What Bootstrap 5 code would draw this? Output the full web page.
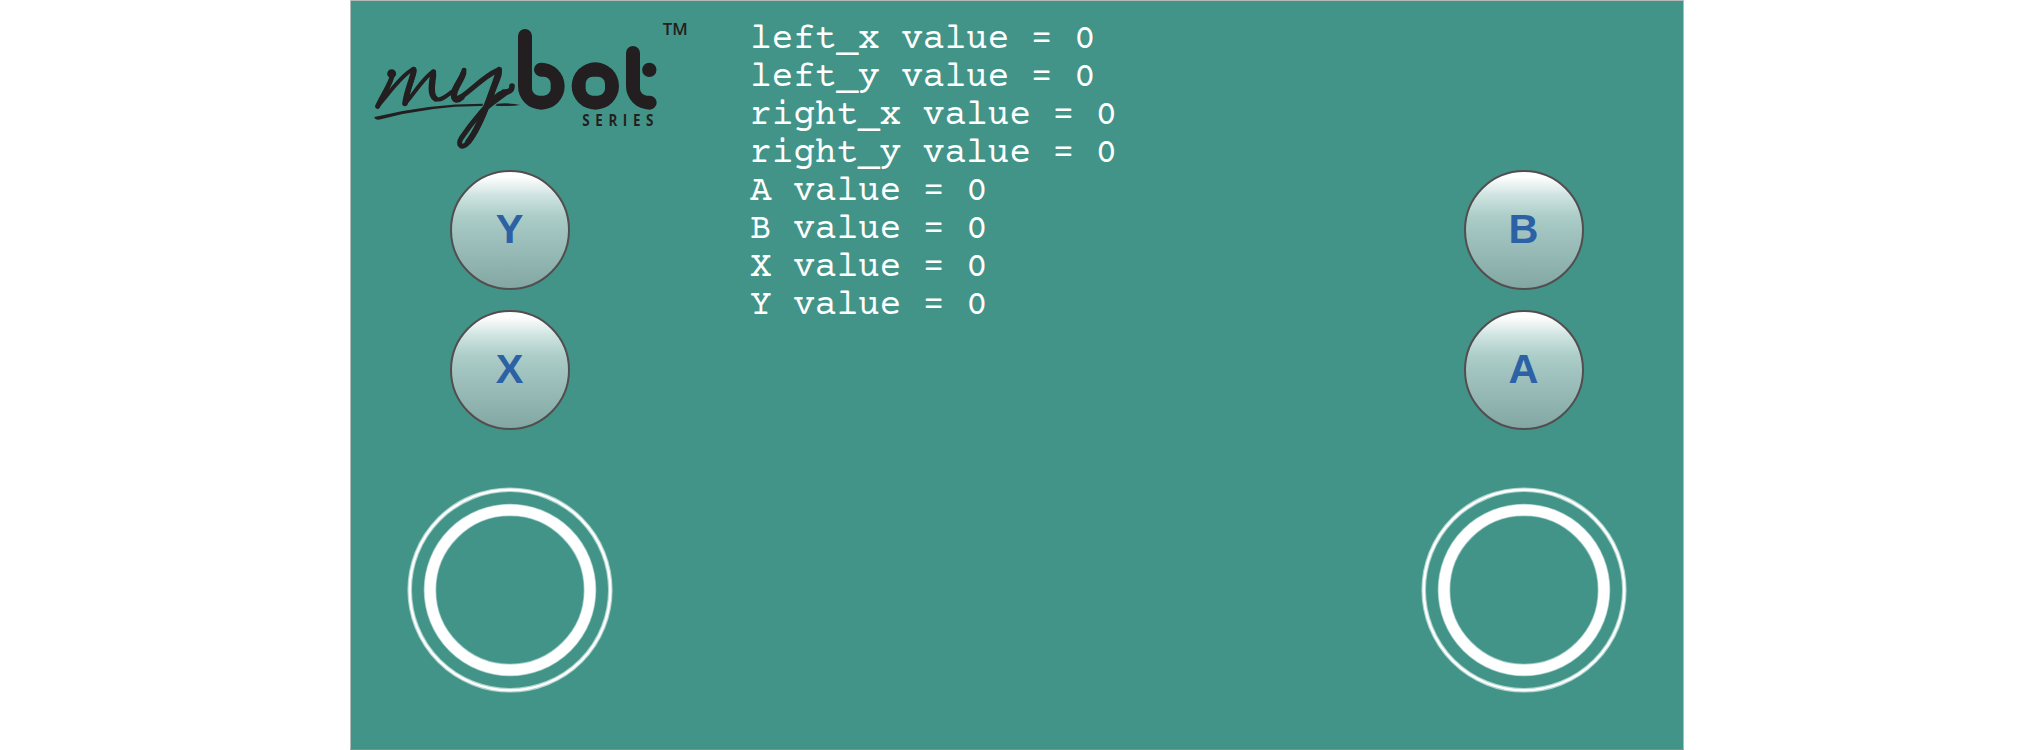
<!DOCTYPE html>
<html lang="en">
<head>
<meta charset="utf-8">
<meta name="viewport" content="width=device-width, initial-scale=1">
<title>mybot controller</title>
<link href="https://cdn.jsdelivr.net/npm/bootstrap@5.3.0/dist/css/bootstrap.min.css" rel="stylesheet">
<style>
  body { background: #fff; }
  .pad-stage { width: 1334px; height: 750px; background: #439488; border: 1px solid #b4bab9; border-bottom-color: #858b89; }
  .pad-side { width: 318px; }
  .pad-logo { height: 169px; width: 318px; }
  .pad-logo svg { display: block; margin-left: 19px; }
  .pad-right { padding-top: 169px; }
  .pad-key { width: 120px; height: 120px; border: 2px solid #544d4f; padding: 0 1px 3px 0; line-height: 1;
    font: 700 41.5px/1 "Liberation Sans", Arial, sans-serif; color: #2c61a5;
    background: linear-gradient(#fff 0%, #fff 4%, #cfe4e1 20%, #accdc8 38%, #a2c5c1 50%, #83a7a4 100%); }
  .pad-keys { gap: 20px; }
  .pad-stick { margin-top: 57px; }
  .pad-values { margin: 20px 0 0 81px; font: 36.2px/38px "Courier Prime", "Liberation Mono", monospace; letter-spacing: -.1px; color: #fff; white-space: pre; }
</style>
</head>
<body>
<main class="pad-stage mx-auto d-flex overflow-hidden">
  <section class="pad-side d-flex flex-column align-items-center flex-shrink-0">
    <div class="pad-logo">
      <svg width="330" height="169" viewBox="75 3 990 507" fill="#231f20" role="img" aria-label="mybot series">
        <!-- script half of the mark -->
        <g fill="none" stroke="#231f20" stroke-linecap="round" stroke-linejoin="round">
          <circle cx="140" cy="221" r="7" stroke-width="13"/>
          <path stroke-width="15" d="M142 222C142 245 111 288 98 319"/>
          <path stroke-width="12" d="M98 318C125 289 173 220 206 207C216 211 196 246 181 310C207 281 241 226 265 215C276 222 249 281 275 298C289 302 304 288 321 275"/>
          <path stroke-width="17" d="M206 209C207 227 187 262 180 310M265 216C263 235 250 283 271 296"/>
          <path stroke-width="15" d="M357 211C355 231 316 273 326 291C342 315 402 235 456 212C472 208 459 235 448 263C425 324 395 402 363 434C347 447 338 432 349 414C378 371 435 301 466 281"/>
          <path stroke-width="18" d="M355 220C350 242 321 271 328 294C333 303 342 299 350 292"/>
          <path stroke-width="18" d="M462 209C458 232 444 263 431 301C415 344 392 397 370 425"/>
          <path stroke-width="11" d="M430 321C457 299 480 284 501 267"/>
          <path stroke-width="17" d="M501 258C501 270 494 277 476 276"/>
        </g>
        <path d="M88 351Q247 311 414 311L412 318Q260 317 108 358Q90 362 88 351Z"/>
        <path d="M456 311Q500 308 525 315Q490 320 451 317Z"/>
        <!-- rounded half of the mark -->
        <path d="M519 108A21 21 0 0 1 561 108V266A21 21 0 0 0 582 287H596A21 21 0 0 0 617 266V251A21 21 0 0 0 596 230H588A21 21 0 0 1 588 188A70 70 0 0 1 589 329A70 70 0 0 1 519 258Z"/>
        <path fill-rule="evenodd" d="M751 187A71 71 0 0 1 751 329A71 71 0 0 1 751 187ZM743 230A21 21 0 0 0 722 251V266A21 21 0 0 0 743 287H759A21 21 0 0 0 780 266V251A21 21 0 0 0 759 230Z"/>
        <path d="M843 159A21 21 0 0 1 885 159V266A21 21 0 0 0 906 287H914A21 21 0 0 1 914 329A71 71 0 0 1 843 258Z"/>
        <circle cx="913" cy="209.500" r="21.500"/>
        <text transform="translate(712 379) scale(.82 1)" font-family="Open Sans, sans-serif" font-weight="700" font-size="49" textLength="260" lengthAdjust="spacing">SERIES</text>
        <text x="953" y="106" font-family="Open Sans, sans-serif" font-weight="600" font-size="48" textLength="75" lengthAdjust="spacingAndGlyphs">TM</text>
      </svg>
    </div>
    <div class="pad-keys d-flex flex-column">
      <button class="pad-key rounded-circle">Y</button>
      <button class="pad-key rounded-circle">X</button>
    </div>
    <svg class="pad-stick" width="206" height="206" viewBox="-103 -103 206 206" fill="none" stroke="#fff" role="img" aria-label="Left stick">
      <circle r="100.300" stroke="#b0d5d0" stroke-width="4.600"/><circle r="100.300" stroke-width="2.400"/>
      <circle r="80" stroke="#a1cdc7" stroke-width="12.600"/><circle r="80" stroke-width="11"/>
    </svg>
  </section>
  <section class="pad-values flex-grow-1">left_x value = 0
left_y value = 0
right_x value = 0
right_y value = 0
A value = 0
B value = 0
X value = 0
Y value = 0</section>
  <section class="pad-side pad-right d-flex flex-column align-items-center flex-shrink-0">
    <div class="pad-keys d-flex flex-column">
      <button class="pad-key rounded-circle">B</button>
      <button class="pad-key rounded-circle">A</button>
    </div>
    <svg class="pad-stick" width="206" height="206" viewBox="-103 -103 206 206" fill="none" stroke="#fff" role="img" aria-label="Right stick">
      <circle r="100.300" stroke="#b0d5d0" stroke-width="4.600"/><circle r="100.300" stroke-width="2.400"/>
      <circle r="80" stroke="#a1cdc7" stroke-width="12.600"/><circle r="80" stroke-width="11"/>
    </svg>
  </section>
</main>
<script src="https://cdn.jsdelivr.net/npm/bootstrap@5.3.0/dist/js/bootstrap.bundle.min.js"></script>
</body>
</html>
